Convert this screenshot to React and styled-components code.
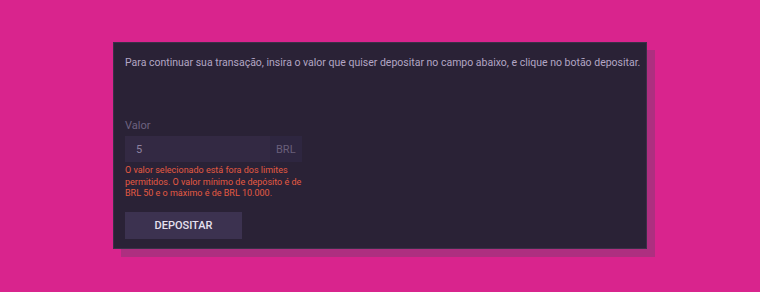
import React from 'react';
import styled, { createGlobalStyle } from 'styled-components';

const GlobalStyle = createGlobalStyle`
  html, body {
    margin: 0;
    padding: 0;
    background: #d9248d;
    font-family: Roboto, "Liberation Sans", sans-serif;
  }
`;

export default function App() {
  return (
    <>
      <GlobalStyle />
      <Page>
        <Panel>
          <Intro>
            Para continuar sua transação, insira o valor que quiser depositar no campo abaixo, e clique no botão depositar.
          </Intro>
          <Field>
            <Label>Valor</Label>
            <InputGroup>
              <Input defaultValue="5" />
              <Addon>BRL</Addon>
            </InputGroup>
            <ErrorText>
              O valor selecionado está fora dos limites permitidos. O valor mínimo de depósito é de BRL 50 e o máximo é de BRL 10.000.
            </ErrorText>
          </Field>
          <Button>DEPOSITAR</Button>
        </Panel>
      </Page>
    </>
  );
}

const Page = styled.div`
  width: 760px;
  height: 292px;
  padding: 42px 0 0 113px;
  box-sizing: border-box;
`;

const Panel = styled.section`
  width: 534px;
  height: 207px;
  box-sizing: border-box;
  background: #2a2236;
  border: 1px solid #3a3048;
  box-shadow: 8px 8px 0 #ae2f80;
  padding: 13px 11px 0 11px;
  display: flex;
  flex-direction: column;
`;

const Intro = styled.p`
  margin: 0;
  font-size: 10.5px;
  line-height: 14px;
  color: #b3a6c4;
  white-space: nowrap;
`;

const Field = styled.div`
  margin-top: 49px;
  display: flex;
  flex-direction: column;
`;

const Label = styled.label`
  font-size: 11px;
  line-height: 14px;
  color: #6e6380;
  margin-bottom: 3px;
`;

const InputGroup = styled.div`
  display: flex;
  width: 177px;
  height: 26px;
  background: #2e2640;
`;

const Input = styled.input`
  width: 145px;
  box-sizing: border-box;
  border: 0;
  outline: none;
  background: #332943;
  color: #8d81a0;
  font-family: Roboto, "Liberation Sans", sans-serif;
  font-size: 11px;
  padding: 0 0 0 11px;
`;

const Addon = styled.span`
  flex: 1;
  display: flex;
  align-items: center;
  padding-left: 6px;
  font-size: 11px;
  color: #6a5f7a;
`;

const ErrorText = styled.p`
  margin: 3px 0 0;
  width: 185px;
  font-size: 9px;
  line-height: 11.5px;
  color: #e45a42;
`;

const Button = styled.button`
  margin-top: 12px;
  width: 117px;
  height: 27px;
  border: 0;
  background: #3c3250;
  color: #e6e0ee;
  font-family: Roboto, "Liberation Sans", sans-serif;
  font-size: 11px;
  font-weight: 500;
  cursor: pointer;
`;
